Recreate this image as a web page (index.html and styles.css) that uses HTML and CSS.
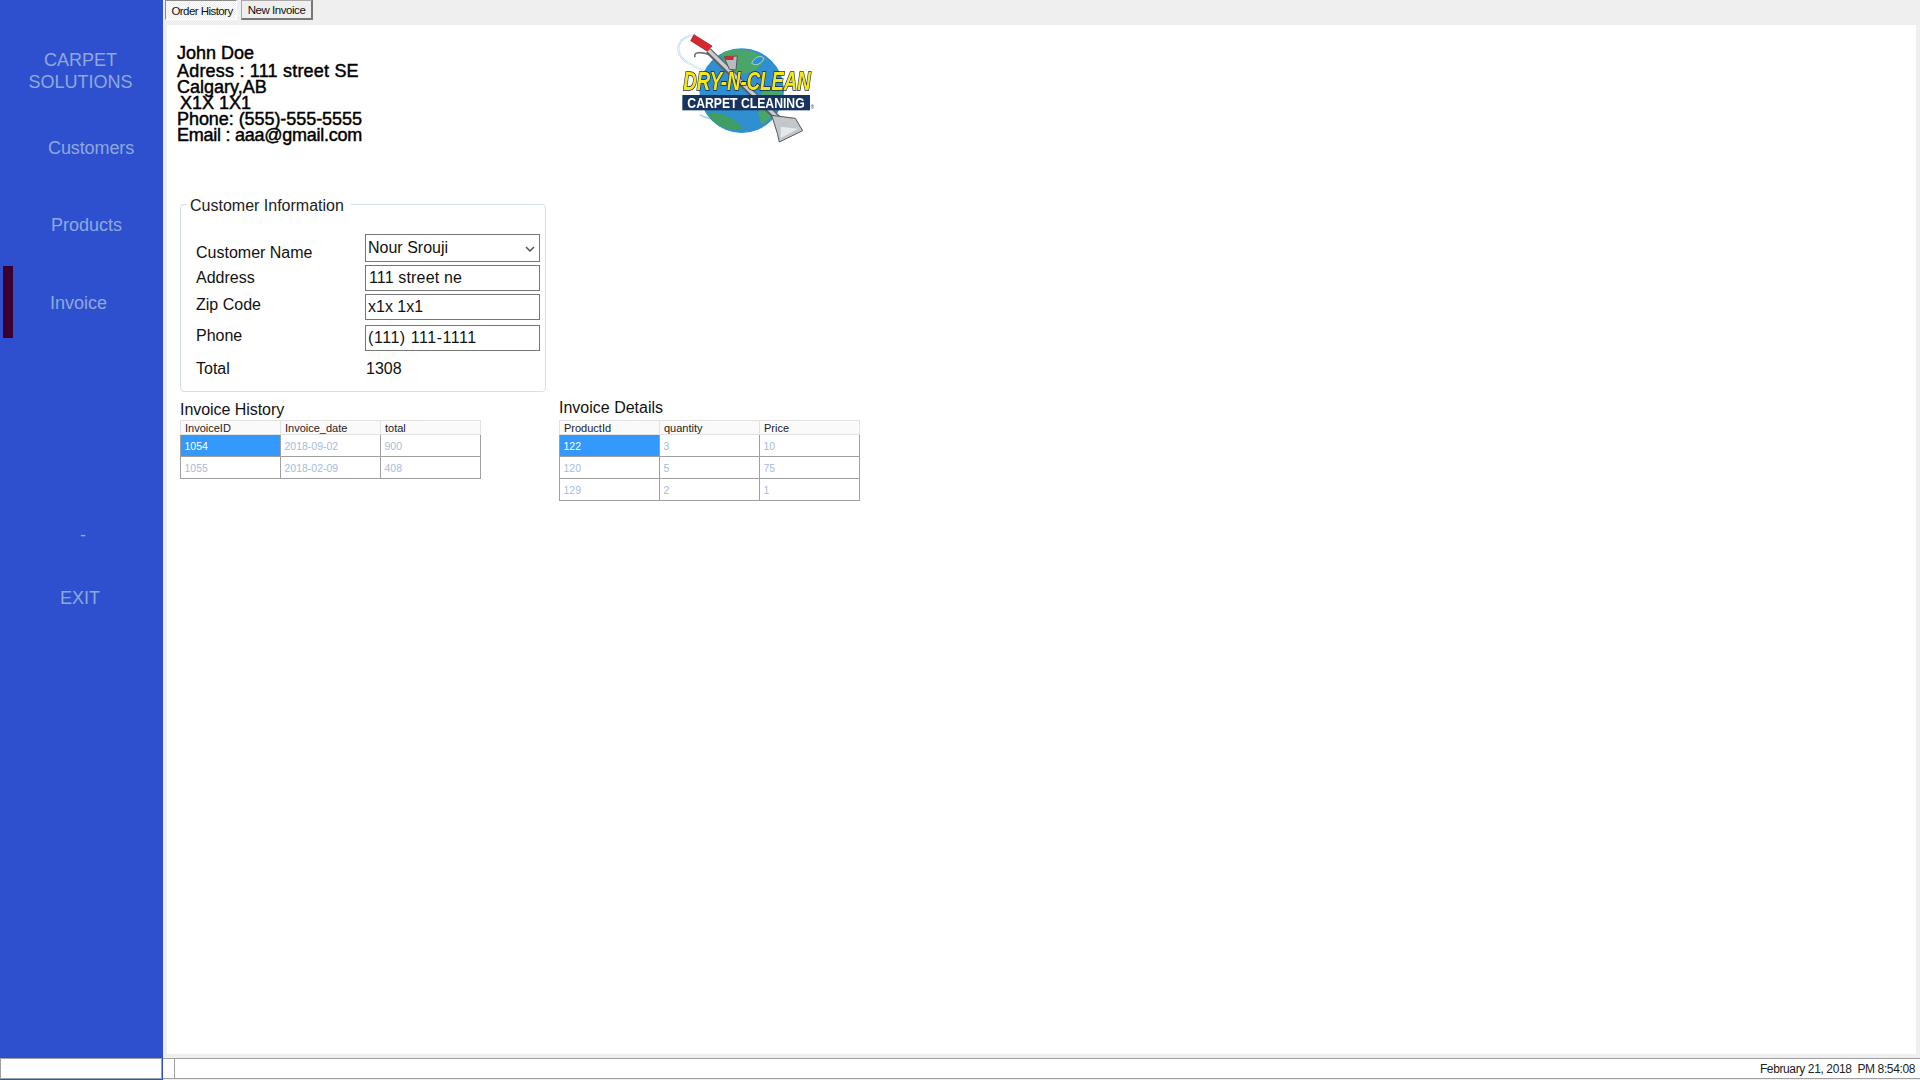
FILE: index.html

```html
<!DOCTYPE html>
<html lang="en">
<head>
  <meta charset="UTF-8">
  <meta name="viewport" content="width=device-width, initial-scale=1.0">
  <title>Carpet Solutions - Invoice</title>
  <link rel="stylesheet" href="styles.css">
</head>
<body>
  <div class="app">
    <aside class="sidebar">
      <div class="brand">CARPET<br>SOLUTIONS</div>
      <a class="nav-item nav-customers">Customers</a>
      <a class="nav-item nav-products">Products</a>
      <a class="nav-item nav-invoice active">Invoice</a>
      <a class="nav-small nav-dash">-</a>
      <a class="nav-small nav-exit">EXIT</a>
      <div class="side-box"></div>
    </aside>

    <div class="content">
      <div class="tabs">
        <button class="tab tab-pressed">Order History</button>
        <button class="tab">New Invoice</button>
      </div>

      <main class="panel">
        <header class="company">
          <div class="company-text">
            <div class="line-name">John Doe</div>
            <div class="line line-street">Adress : 111 street SE</div>
            <div class="line">Calgary,AB</div>
            <div class="line line-zip">X1X 1X1</div>
            <div class="line line-phone">Phone: (555)-555-5555</div>
            <div class="line line-email">Email : aaa@gmail.com</div>
          </div>
          <svg class="logo" viewBox="0 15 540 375" width="180" height="125">
            <path d="M135 46 C95 50 75 75 90 105 C105 135 165 150 200 172" fill="none" stroke="#a9d3ea" stroke-width="6"/>
            <path d="M135 46 C95 50 75 75 90 105 C105 135 165 150 200 172" fill="none" stroke="#fff" stroke-width="3"/>
            <path d="M150 285 C190 305 240 300 300 295" fill="none" stroke="#a9d3ea" stroke-width="5"/>
            <circle cx="275" cy="212" r="127" fill="#2f8fd0"/>
            <path d="M215 100 C250 82 310 85 345 115 C330 150 300 165 265 160 C235 150 215 130 215 100Z" fill="#49a56a"/>
            <path d="M340 210 C365 215 385 205 398 190 C400 240 375 290 335 315 C320 280 320 235 340 210Z" fill="#49a56a"/>
            <path d="M170 280 C205 270 250 290 280 325 C240 340 195 320 170 280Z" fill="#3f9e64"/>
            <path d="M305 130 C315 108 335 105 342 115 C335 130 320 140 305 130Z" fill="#2f8fd0" stroke="#d8eef8" stroke-width="2"/>
            <path d="M135 112 C130 98 145 95 165 100 L215 118" fill="none" stroke="#70757a" stroke-width="5"/>
            <path d="M175 92 L400 312" stroke="#5c6166" stroke-width="20"/>
            <path d="M175 90 L400 310" stroke="#c9cdd0" stroke-width="10"/>
            <path d="M132 44 L186 78 L172 94 L122 62Z" fill="#d9262c" stroke="#8a1a1e" stroke-width="2"/>
            <path d="M222 110 L262 108 L258 150 L238 148Z" fill="#b8bcc0" stroke="#55595d" stroke-width="3"/>
            <path d="M224 110 L252 108 L250 120 L226 120Z" fill="#d9262c"/>
            <text class="logo-title" x="100" y="209" textLength="382" lengthAdjust="spacingAndGlyphs">DRY-N-CLEAN</text>
            <rect x="97" y="225" width="383" height="46" fill="#17335f"/>
            <text class="logo-sub" x="112" y="264" textLength="352" lengthAdjust="spacingAndGlyphs">CARPET CLEANING</text>
            <path d="M365 286 L436 295 L458 332 L388 366 L382 340Z" fill="#c4c7ca" stroke="#55595d" stroke-width="3"/>
            <path d="M392 320 L444 326 L392 354Z" fill="#e6e8ea"/>
            <text class="logo-reg" x="482" y="268">®</text>
          </svg>
        </header>

        <fieldset class="customer-box">
          <legend>Customer Information</legend>
          <div class="form-grid">
            <label class="lbl lbl-name">Customer Name</label>
            <div class="select-box">
              <span>Nour Srouji</span>
              <svg class="chevron" width="10" height="6" viewBox="0 0 10 6"><path d="M1 1 L5 5 L9 1" fill="none" stroke="#555" stroke-width="1.5"/></svg>
            </div>
            <label class="lbl">Address</label>
            <input class="field field-address" value="111 street ne">
            <label class="lbl lbl-zip">Zip Code</label>
            <input class="field" value="x1x 1x1">
            <label class="lbl lbl-phone">Phone</label>
            <input class="field field-phone" value="(111) 111-1111">
            <label class="lbl lbl-total">Total</label>
            <div class="total">1308</div>
          </div>
        </fieldset>

        <div class="grids">
          <section class="grid-block grid-history">
            <h2>Invoice History</h2>
            <table>
              <thead>
                <tr><th>InvoiceID</th><th>Invoice_date</th><th>total</th></tr>
              </thead>
              <tbody>
                <tr><td class="selected">1054</td><td>2018-09-02</td><td>900</td></tr>
                <tr><td>1055</td><td>2018-02-09</td><td>408</td></tr>
              </tbody>
            </table>
          </section>
          <section class="grid-block grid-details">
            <h2>Invoice Details</h2>
            <table>
              <thead>
                <tr><th>ProductId</th><th>quantity</th><th>Price</th></tr>
              </thead>
              <tbody>
                <tr><td class="selected">122</td><td>3</td><td>10</td></tr>
                <tr><td>120</td><td>5</td><td>75</td></tr>
                <tr><td>129</td><td>2</td><td>1</td></tr>
              </tbody>
            </table>
          </section>
        </div>
      </main>

      <footer class="statusbar">
        <div class="status-first"></div>
        <div class="status-time">February 21, 2018  PM 8:54:08</div>
      </footer>
    </div>
  </div>
</body>
</html>
```

FILE: styles.css

```css
* { box-sizing: border-box; }
html, body { margin: 0; height: 100%; overflow: hidden; }
body { font-family: "Liberation Sans", Arial, sans-serif; background: #efefef; color: #111; }
.app { display: flex; width: 1920px; height: 1080px; }

/* sidebar */
.sidebar { width: 163px; height: 1080px; flex: none; background: #2e50cf; color: #8ea8dc; font-size: 18px; padding-top: 49px; position: relative; }
.brand { text-align: center; line-height: 22px; height: 44px; margin-bottom: 17px; padding-right: 2px; }
.nav-item { display: flex; align-items: center; height: 77px; position: relative; }
.nav-customers { padding-left: 48px; letter-spacing: -0.1px; }
.nav-products { padding-left: 51px; }
.nav-invoice { padding-left: 50px; padding-top: 2px; }
.nav-item.active::before { content: ""; position: absolute; left: 3px; top: 2px; width: 10px; height: 72px; background: #3c0030; }
.nav-small { display: flex; align-items: center; height: 62px; }
.nav-dash { margin-top: 163px; padding-left: 80px; }
.nav-exit { padding-left: 60px; padding-top: 2px; }
.side-box { position: absolute; left: 0; right: 1px; top: 1058px; height: 21px; background: #fff; border: 1px solid #a0a0a0; }

/* right side */
.content { flex: 1; display: flex; flex-direction: column; min-width: 0; }
.tabs { display: flex; height: 25px; padding-left: 2px; gap: 4px; align-items: flex-start; }
.tab { font-family: "Liberation Sans", Arial, sans-serif; font-size: 11.5px; letter-spacing: -0.45px; height: 20px; width: 72px; padding: 0; color: #111; background: #efefef; border: 1px solid #a8a8a8; border-right: 2px solid #777; border-bottom: 2px solid #777; }
.tab-pressed { letter-spacing: -0.55px; padding: 1px 0 0 2px; background: repeating-conic-gradient(#ececec 0 25%, #fff 0 50%) 0 0 / 2px 2px; border: 1px solid #fff; border-top-color: #8a8a8a; border-left-color: #8a8a8a; }

.panel { background: #fff; height: 1029px; margin: 0 4px; padding-left: 10px; }

.company { display: flex; height: 125px; }
.company-text { width: 473px; padding-top: 19px; font-size: 18px; color: #000; -webkit-text-stroke: 0.45px #000; }
.line-name { height: 18px; line-height: 18px; }
.line { height: 16px; line-height: 16px; }
.line-street { height: 18px; line-height: 18px; margin-bottom: -1px; letter-spacing: 0.2px; }
.line-zip { padding-left: 3px; }
.line-phone { letter-spacing: -0.06px; }
.line-email { letter-spacing: -0.25px; }
.logo { display: block; flex: none; filter: blur(0.4px); }
.logo-title { font-family: "Liberation Sans", sans-serif; font-weight: bold; font-style: italic; font-size: 78px; fill: #f5e614; stroke: #10244e; stroke-width: 5px; paint-order: stroke; }
.logo-sub { font-family: "Liberation Sans", sans-serif; font-weight: bold; font-size: 44px; fill: #fff; }
.logo-reg { font-family: "Liberation Sans", sans-serif; font-size: 14px; fill: #17335f; }

/* customer info */
.customer-box { width: 366px; height: 199px; margin: 43px 0 0 3px; padding: 0 5px 0 15px; border: 1px solid #d5dfe7; border-radius: 4px; }
.customer-box legend { font-size: 16px; line-height: 18px; padding: 4px 7px 0 3px; margin-left: -9px; color: #222; }
.form-grid { display: grid; grid-template-columns: 169px 175px; grid-template-rows: 28px 26px 26px 28px 30px; row-gap: 3px; margin-top: 19px; font-size: 16px; }
.lbl { display: flex; align-items: center; }
.lbl-name { padding-top: 10px; }
.lbl-zip { padding-bottom: 4px; }
.lbl-phone { padding-bottom: 3px; }
.select-box { display: flex; align-items: center; justify-content: space-between; border: 1px solid #767676; padding: 0 4px 1px 2px; font-size: 16px; background: #fff; }
.chevron { margin-top: 2px; }
.field { width: 175px; height: 26px; padding: 0 2px; font-family: "Liberation Sans", Arial, sans-serif; font-size: 16px; color: #111; border: 1px solid #767676; border-radius: 0; outline: none; }
.field-address { padding-left: 3px; letter-spacing: 0.15px; }
.field-phone { margin-top: 2px; letter-spacing: 0.55px; }
.total { display: flex; align-items: center; padding-left: 1px; }

/* grids */
.grids { display: flex; align-items: flex-start; margin: 6px 0 0 3px; }
.grid-block h2 { margin: 0; font-size: 16px; font-weight: normal; line-height: 20px; height: 22px; color: #111; }
.grid-history { width: 379px; }
.grid-history h2 { padding-top: 2px; letter-spacing: -0.05px; }
table { border-collapse: collapse; table-layout: fixed; width: 301px; }
th { height: 14px; padding: 0 0 0 4px; font-size: 11px; font-weight: normal; text-align: left; background: #fafafa; border: 1px solid #e2e2e2; color: #222; }
td { height: 22px; padding: 0 0 0 3.5px; font-size: 10.5px; color: #a8bbdb; border: 1px solid #a0a0a0; }
td.selected { background: #3399ff; color: #fff; }

/* status bar */
.statusbar { display: flex; justify-content: space-between; height: 21px; margin-top: 4px; background: #fff; border-top: 1px solid #a0a0a0; border-bottom: 1px solid #a0a0a0; font-size: 12px; }
.status-first { width: 12px; border-right: 1px solid #a0a0a0; }
.status-time { white-space: pre; line-height: 21px; padding-right: 5px; letter-spacing: -0.38px; color: #222; }
```
